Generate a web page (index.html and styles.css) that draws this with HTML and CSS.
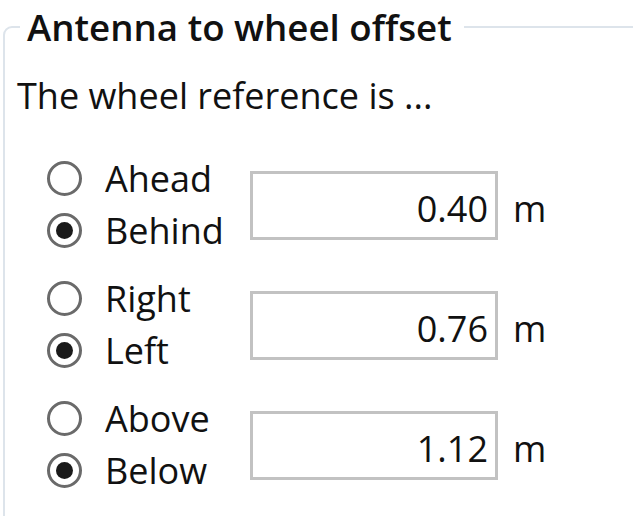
FILE: index.html
```html
<!DOCTYPE html>
<html lang="en">
<head>
  <meta charset="UTF-8">
  <title>Antenna to wheel offset</title>
  <link rel="stylesheet" href="styles.css">
</head>
<body>
  <fieldset class="offset-group">
    <legend class="offset-title">Antenna to wheel offset</legend>
    <p class="offset-hint">The wheel reference is ...</p>

    <div class="offset-row">
      <div class="radio-pair">
        <label class="radio-opt"><span class="radio-dot"></span>Ahead</label>
        <label class="radio-opt"><span class="radio-dot is-checked"></span>Behind</label>
      </div>
      <div class="offset-box">0.40</div>
      <span class="offset-unit">m</span>
    </div>

    <div class="offset-row">
      <div class="radio-pair">
        <label class="radio-opt"><span class="radio-dot"></span>Right</label>
        <label class="radio-opt"><span class="radio-dot is-checked"></span>Left</label>
      </div>
      <div class="offset-box">0.76</div>
      <span class="offset-unit">m</span>
    </div>

    <div class="offset-row">
      <div class="radio-pair">
        <label class="radio-opt"><span class="radio-dot"></span>Above</label>
        <label class="radio-opt"><span class="radio-dot is-checked"></span>Below</label>
      </div>
      <div class="offset-box">1.12</div>
      <span class="offset-unit">m</span>
    </div>
  </fieldset>
</body>
</html>
```

FILE: styles.css
```css
* {
  margin: 0;
  padding: 0;
  box-sizing: border-box;
}

body {
  background-color: #ffffff;
  color: #111111;
  font-family: "Open Sans", "Noto Sans", sans-serif;
  font-size: 36px;
  height: 100vh;
  overflow: hidden;
}

.offset-group {
  margin: 7px 0 0 3px;
  padding: 0 0 0 12px;
  width: 700px;
  height: 600px;
  border: 2px solid #dde4eb;
  border-radius: 9px;
}

.offset-title {
  margin-left: 3px;
  padding: 0 12px 0 7px;
  font-size: 36.7px;
  font-weight: 600;
  line-height: 40px;
}

.offset-hint {
  margin-top: 27px;
  line-height: 44px;
}

.offset-row {
  display: flex;
  align-items: center;
  margin-top: 34px;
  height: 104px;
}

.offset-row + .offset-row {
  margin-top: 16px;
}

.radio-pair {
  display: flex;
  flex-direction: column;
  width: 233px;
  padding-left: 30px;
}

.radio-opt {
  display: flex;
  align-items: center;
  height: 52px;
}

.radio-dot {
  width: 35px;
  height: 35px;
  border: 3px solid #6a6a6a;
  border-radius: 50%;
  margin-right: 23px;
  display: flex;
  align-items: center;
  justify-content: center;
}

.radio-dot.is-checked::after {
  content: "";
  width: 17px;
  height: 17px;
  border-radius: 50%;
  background-color: #1a1a1a;
}

.offset-box {
  width: 248px;
  height: 69px;
  margin-top: 2px;
  border: 3px solid #c2c2c2;
  text-align: right;
  padding: 7px 7px 0 0;
  line-height: 56px;
}

.offset-unit {
  margin-left: 15px;
  padding-top: 8px;
}
```
